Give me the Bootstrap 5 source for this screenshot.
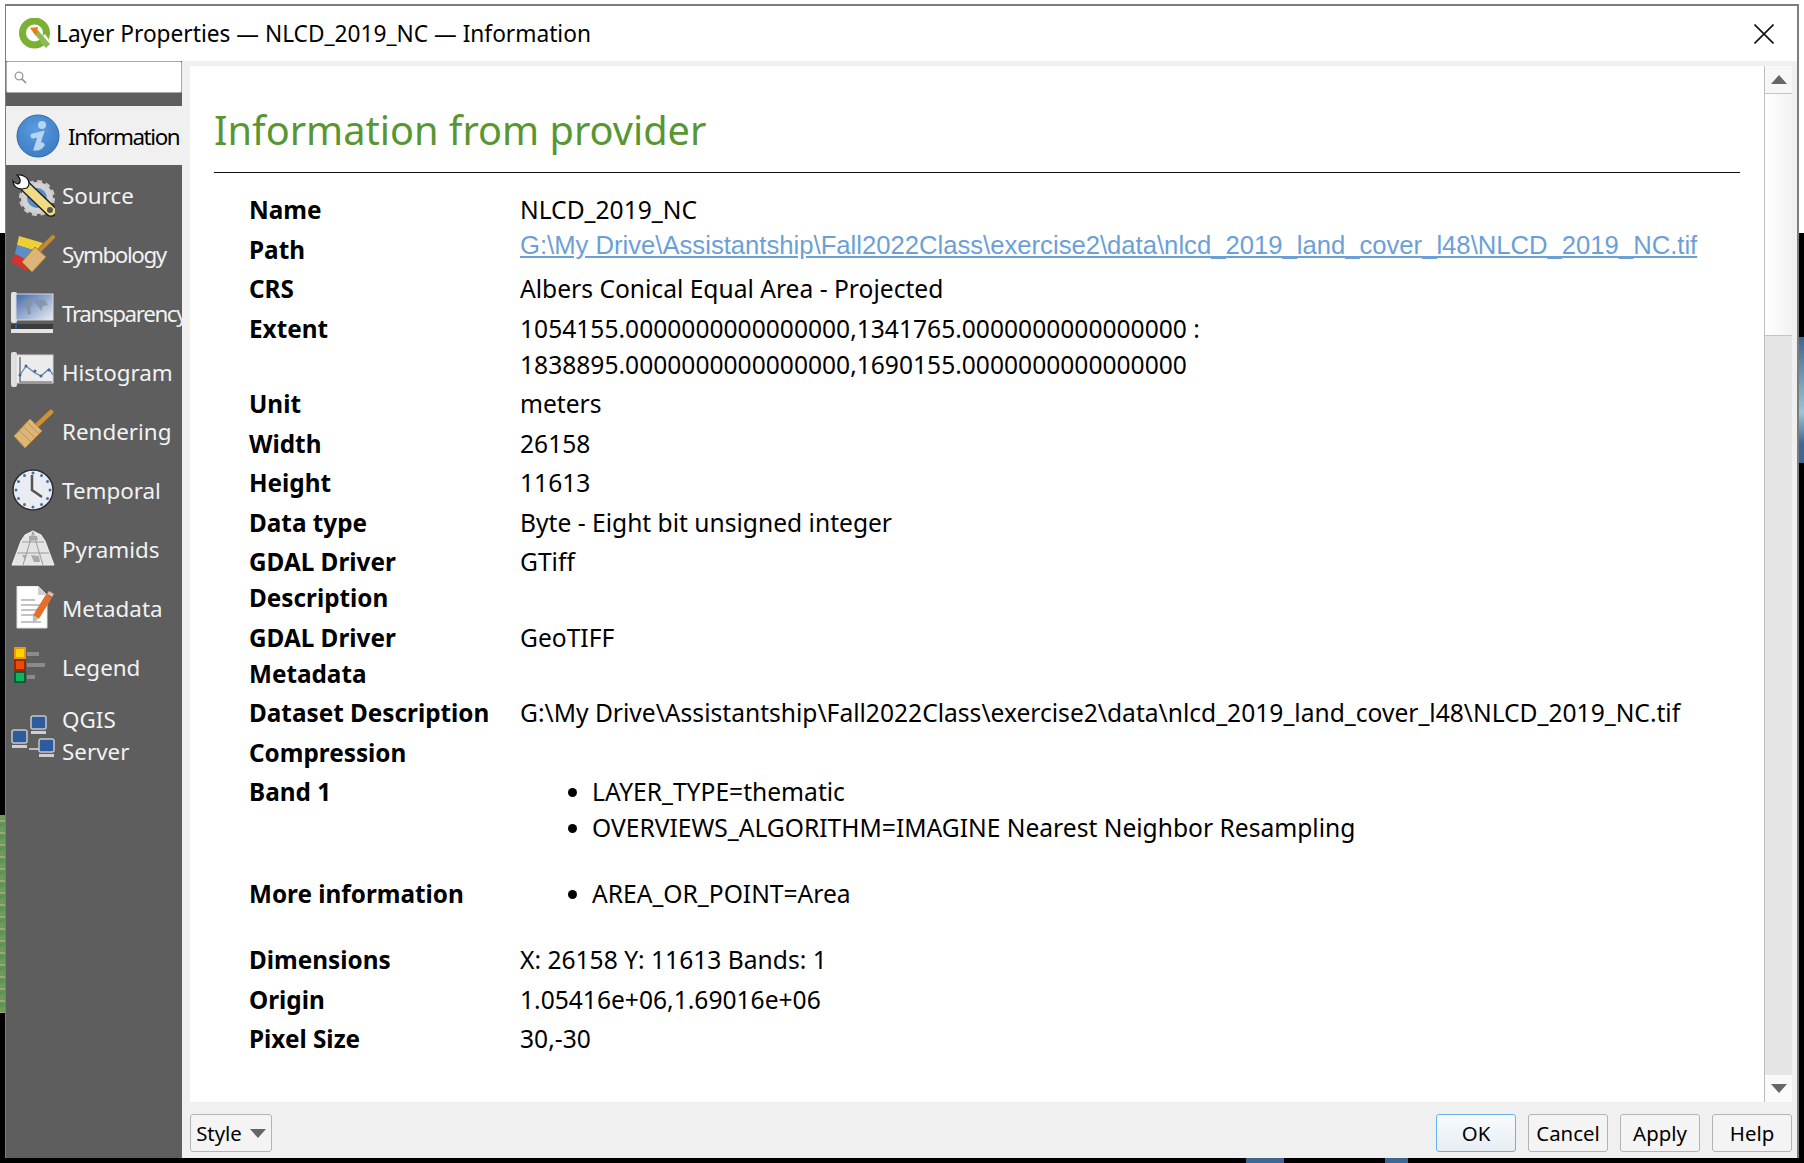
<!DOCTYPE html>
<html lang="en">
<head>
  <meta charset="UTF-8" />
  <meta name="viewport" content="width=device-width, initial-scale=1" />
  <title>Layer Properties</title>
  <link href="https://cdn.jsdelivr.net/npm/bootstrap@5.3.3/dist/css/bootstrap.min.css" rel="stylesheet" />
  <style>
    html, body { height: 100%; }
    body {
      margin: 0; overflow: hidden; position: relative;
      background: linear-gradient(#fff 0 233px, #000 233px);
      padding: 4px 5px 5px 5px;
      font-family: "Noto Sans", "Open Sans", sans-serif;
      font-size: 24.6px; color: #000;
    }
    .map-bit { position: absolute; }
    .map-left { left: 0; top: 815px; width: 5px; height: 198px; background: repeating-linear-gradient(#6f9a5c 0 5px, #9aa873 5px 7px, #5f9458 7px 12px); }
    .map-right { left: 1799px; top: 337px; width: 5px; height: 126px; background: linear-gradient(#3f6592, #7fa6bb 40%, #9fc3d3 60%, #3f6592 85%); }
    .map-b1 { left: 1246px; top: 1158px; width: 38px; height: 5px; background: #3f6592; }
    .map-b2 { left: 1385px; top: 1158px; width: 23px; height: 5px; background: #3f6592; }

    .dlg { height: 1154px; background: #f0f0f0; border: solid #7d7d7d; border-width: 2px 2px 0 1px; position: relative; }
    .dlg-title { height: 55px; background: #fff; padding-left: 13px; font-size: 22.7px; }
    .dlg-title span { margin-left: 5px; margin-top: 2px; }
    .close-x { border: 0; background: none; padding: 0; margin-right: 23px; line-height: 0; }

    .side { width: 176px; background: #5e5e5e; font-size: 22.4px; }
    .side-search { height: 32px; background: #fff; border: 1px solid #a9a9a9; border-radius: 2px; padding-left: 7px; margin-bottom: 13px; }
    .side-item { height: 59px; color: #f2f2f2; padding-left: 5px; gap: 7px; white-space: nowrap; overflow: hidden; }
    .side-item svg { flex: none; }
    .side-item span { padding-top: 3px; }
    .side-item.sel { background: #f0f0f0; color: #000; padding-left: 10px; gap: 8px; }
    .side-item.two { height: 80px; white-space: normal; line-height: 32px; }
    .side-item.two span { padding-top: 0; }
    .side-item .tight { letter-spacing: -1.4px; }

    .pane-wrap { margin: 5px 5px 0 8px; height: 1036px; }
    .pane { background: #fff; padding: 36px 24px 0 24px; overflow: hidden; }
    .pane h1 { color: #589632; font-size: 39.7px; font-weight: 400; line-height: 56px; margin: 0; padding-bottom: 14px; border-bottom: 1px solid #111; }
    .info-tbl { margin: 17px 0 0 35px; width: auto; }
    .info-tbl.table > tbody > tr > td { padding: 2px 0 1.5px; line-height: 36px; background: transparent; vertical-align: top; color: #000; }
    .info-tbl td:first-child { width: 271px; font-weight: 700; font-size: 24.3px; }
    .path-link { display: inline-block; vertical-align: top; line-height: 27px; font-family: "Liberation Sans", Arial, sans-serif; font-size: 25.65px; color: #6b9fd8; }
    .info-tbl ul { margin: 0 0 26.5px; padding-left: 72px; }

    .sbar { width: 28px; border-left: 1px solid #bdbdbd; background: #e5e5e5; }
    .sbar-btn { height: 27px; background: #fafafa; }
    .sbar-up { height: 270px; background: linear-gradient(90deg, #fff, #f2f2f2); border-bottom: 1px solid #c4c4c4; }
    .sbar-up .sbar-btn { border-bottom: 1px solid #c4c4c4; background: #f7f7f7; height: 28px; }
    .tri-up { width: 0; height: 0; border: 8px solid transparent; border-top: 0; border-bottom: 9px solid #666; }
    .tri-dn { width: 0; height: 0; border: 8px solid transparent; border-bottom: 0; border-top: 9px solid #666; }

    .foot { height: 56px; padding: 12px 5px 0 8px; }
    .foot-btns { gap: 12px; }
    .qbtn { height: 38px; width: 80px; padding: 1px 0 0; font-size: 20.4px; color: #000; background: #f4f4f4; border: 1px solid #b4b4b4; border-radius: 3px; line-height: 1; }
    .qbtn.on { border-color: #62b3f0; background: linear-gradient(#f8fbfe, #e6edf3); }
    .qbtn.dropdown-toggle { width: 82px; }
    .qbtn.dropdown-toggle::after { border-top: 9px solid #666; border-left: 8px solid transparent; border-right: 8px solid transparent; border-bottom: 0; margin-left: 8px; vertical-align: 3px; }
  </style>
</head>
<body>
  <div class="map-bit map-left"></div>
  <div class="map-bit map-right"></div>
  <div class="map-bit map-b1"></div>
  <div class="map-bit map-b2"></div>

  <div class="dlg d-flex flex-column">
    <div class="dlg-title d-flex align-items-center">
      <svg width="32" height="32" viewBox="0 0 32 32">
        <circle cx="15.500" cy="15" r="12" fill="none" stroke="#7cb034" stroke-width="7"/>
        <path d="M20 21l6-5 6 9-4 6z" fill="#fff"/>
        <path d="M14 14l4-3 13 15-4 4z" fill="#8dbb4e"/>
        <path d="M11 10l8-1-2 9z" fill="#ee7913"/>
      </svg>
      <span>Layer Properties — NLCD_2019_NC — Information</span>
      <button class="close-x ms-auto" type="button" aria-label="Close">
        <svg width="20" height="20" viewBox="0 0 20 20"><path d="M0.5 0.5l19 19M19.5 0.5l-19 19" stroke="#111" stroke-width="1.6" fill="none"/></svg>
      </button>
    </div>

    <div class="d-flex flex-grow-1">
      <div class="side flex-none">
        <div class="side-search d-flex align-items-center">
          <svg width="13" height="13" viewBox="0 0 13 13"><circle cx="5" cy="5" r="3.8" fill="none" stroke="#999" stroke-width="1.3"/><path d="M8 8l4 4" stroke="#888" stroke-width="1.6"/></svg>
        </div>

        <div class="side-item sel d-flex align-items-center">
          <svg width="44" height="44" viewBox="0 0 44 44">
            <defs><radialGradient id="gi" cx="45%" cy="35%" r="70%"><stop offset="0" stop-color="#5b9be0"/><stop offset="1" stop-color="#3a7cc2"/></radialGradient></defs>
            <circle cx="22" cy="22" r="21" fill="url(#gi)" stroke="#2f6aa8"/>
            <circle cx="26" cy="11" r="4" fill="#b5d5f2"/>
            <path d="M17 22l8-2-4.500 14c2.500 0 4-1 5.500-3" fill="none" stroke="#b5d5f2" stroke-width="5" stroke-linecap="round"/>
          </svg>
          <span class="tight">Information</span>
        </div>

        <div class="side-item d-flex align-items-center">
          <svg width="44" height="44" viewBox="0 0 44 44">
            <circle cx="26" cy="25" r="13" fill="#5b8dc6" stroke="#d2d2d2" stroke-width="6"/>
            <circle cx="26" cy="25" r="16.500" fill="none" stroke="#c9c9c9" stroke-width="3" stroke-dasharray="5 3.600"/>
            <path d="M15 14l25 24" stroke="#222" stroke-width="12" stroke-linecap="round"/>
            <path d="M15 14l25 24" stroke="#efdc85" stroke-width="9" stroke-linecap="round"/>
            <circle cx="39" cy="37" r="3" fill="#555"/>
            <path d="M2 8c2 3 6 4 7 1s-1-5-3-7c6-1 12 3 12 9 0 1-1 3-2 4l-5 1c-5 0-9-3-9-8z" fill="#fff" stroke="#111" stroke-width="1.200"/>
          </svg>
          <span>Source</span>
        </div>

        <div class="side-item d-flex align-items-center">
          <svg width="44" height="44" viewBox="0 0 44 44">
            <path d="M8 4l24 7-7 8-19-6z" fill="#ecd035"/>
            <path d="M6 13l19 6-7 10L4 22z" fill="#5a8fc9"/>
            <path d="M4 22l14 7-2 10L0 30z" fill="#d8312f"/>
            <path d="M27 20L42 5" stroke="#c58a2c" stroke-width="4" stroke-linecap="round"/>
            <path d="M24 15l11 10-14 15-10-10z" fill="#dcb577" stroke="#b47f30"/>
          </svg>
          <span class="tight">Symbology</span>
        </div>

        <div class="side-item d-flex align-items-center">
          <svg width="44" height="44" viewBox="0 0 44 44">
            <defs><linearGradient id="gt" x1="0" y1="0" x2="1" y2="1"><stop offset="0" stop-color="#3f68ad"/><stop offset="1" stop-color="#eceef2"/></linearGradient></defs>
            <rect x="0" y="1" width="6" height="31" rx="2" fill="#e4e4e4"/>
            <rect x="5" y="3" width="37" height="26" fill="url(#gt)" stroke="#d8d8d8"/>
            <path d="M12 10l7-2 3 4-3 4 1 7-3 1-2-8-3-2zM24 8l10 1 3 5-5 1-2 5-3-5-3-3z" fill="#8590a0" opacity=".8"/>
            <rect x="0" y="33" width="42" height="7" fill="#3b3b3b"/>
            <rect x="0" y="38" width="42" height="4" fill="#e4e4e4"/>
            <rect x="4" y="32" width="2" height="6" fill="#2c5aa0"/>
          </svg>
          <span class="tight">Transparency</span>
        </div>

        <div class="side-item d-flex align-items-center">
          <svg width="44" height="44" viewBox="0 0 44 44">
            <rect x="0" y="2" width="6" height="35" rx="2" fill="#e0e0e0"/>
            <rect x="5" y="5" width="37" height="28" fill="#ececec" stroke="#d4d4d4"/>
            <path d="M9 7v25h32" fill="none" stroke="#555" stroke-width="1.200"/>
            <path d="M9 25l6-9 9 7 6 3 8-7 4 6" fill="none" stroke="#5d7fa8" stroke-width="1.200"/>
            <g fill="#3b68a5"><circle cx="9" cy="25" r="1.500"/><circle cx="15" cy="16" r="1.500"/><circle cx="24" cy="21" r="1.500"/><circle cx="30" cy="26" r="1.500"/><circle cx="38" cy="20" r="1.500"/></g>
          </svg>
          <span>Histogram</span>
        </div>

        <div class="side-item d-flex align-items-center">
          <svg width="44" height="44" viewBox="0 0 44 44">
            <path d="M23 19L40 3" stroke="#d0922f" stroke-width="4.500" stroke-linecap="round"/>
            <path d="M19 10l12 12-17 17L3 27z" fill="#dcb577" stroke="#bd8a38"/>
            <path d="M9 22l11 11M13 18l11 11M17 14l11 11" stroke="#c29350" fill="none"/>
          </svg>
          <span>Rendering</span>
        </div>

        <div class="side-item d-flex align-items-center">
          <svg width="44" height="44" viewBox="0 0 44 44">
            <circle cx="22" cy="22" r="20" fill="#e9edf1" stroke="#2f2f2f" stroke-width="1.500"/>
            <g fill="#3e70b0"><circle cx="22" cy="5" r="1.500"/><circle cx="22" cy="39" r="1.500"/><circle cx="5" cy="22" r="1.500"/><circle cx="39" cy="22" r="1.500"/><circle cx="13.500" cy="7.500" r="1.500"/><circle cx="30.500" cy="7.500" r="1.500"/><circle cx="13.500" cy="36.500" r="1.500"/><circle cx="30.500" cy="36.500" r="1.500"/><circle cx="7.500" cy="13.500" r="1.500"/><circle cx="36.500" cy="13.500" r="1.500"/><circle cx="7.500" cy="30.500" r="1.500"/><circle cx="36.500" cy="30.500" r="1.500"/></g>
            <path d="M21 7v15l10 7" fill="none" stroke="#555" stroke-width="2.500"/>
          </svg>
          <span>Temporal</span>
        </div>

        <div class="side-item d-flex align-items-center">
          <svg width="44" height="44" viewBox="0 0 44 44">
            <path d="M14 8l8-4 8 4 4 6 9 24H1l9-24z" fill="#e4e4e4" stroke="#f2f2f2"/>
            <path d="M22 5L12 38M22 5l10 33M6 26h32M11 15h22" stroke="#9a9a9a" fill="none"/>
            <path d="M18 9l8 0 1 4-9 1zM20 28l8 1 1 6-6 0zM11 28l5 0-2 5z" fill="#a8a8a8"/>
          </svg>
          <span>Pyramids</span>
        </div>

        <div class="side-item d-flex align-items-center">
          <svg width="44" height="44" viewBox="0 0 44 44">
            <path d="M6 0h21l9 9v33H6z" fill="#fff" stroke="#ddd"/>
            <path d="M27 0v9h9z" fill="#cfcfcf"/>
            <path d="M10 14h14M10 19h20M10 24h18M10 29h17M10 36h20" stroke="#888" stroke-width="1.200"/>
            <path d="M25 31l13-21" stroke="#e2702a" stroke-width="7"/>
            <path d="M36 8l2-3 5 3-2 3z" fill="#e9b7a0"/>
            <path d="M21.800 29l6 3.500-6 5z" fill="#bbb"/>
          </svg>
          <span>Metadata</span>
        </div>

        <div class="side-item d-flex align-items-center">
          <svg width="44" height="44" viewBox="0 0 44 44">
            <rect x="4" y="3" width="10" height="10" fill="#ffd500" stroke="#f0960e" stroke-width="2"/>
            <rect x="4" y="15" width="10" height="10" fill="#f04a00" stroke="#8f2b12" stroke-width="2"/>
            <rect x="4" y="27" width="10" height="10" fill="#10b45c" stroke="#0b5c38" stroke-width="2"/>
            <path d="M16 9h12M16 20h18M16 32h8" stroke="#8b8b8b" stroke-width="4"/>
          </svg>
          <span>Legend</span>
        </div>

        <div class="side-item two d-flex align-items-center">
          <svg width="44" height="44" viewBox="0 0 44 44">
            <path d="M29 27v8M18 35h10" stroke="#bbb" stroke-width="2"/>
            <rect x="20" y="2" width="15" height="13" rx="2" fill="#2e5a9f" stroke="#c6c6c6" stroke-width="1.500"/>
            <path d="M20 17h15v3H20z" fill="#cfcfcf"/>
            <rect x="1" y="16" width="15" height="13" rx="2" fill="#2e5a9f" stroke="#c6c6c6" stroke-width="1.500"/>
            <path d="M1 31h15v3H1z" fill="#cfcfcf"/>
            <rect x="28" y="25" width="15" height="13" rx="2" fill="#2e5a9f" stroke="#c6c6c6" stroke-width="1.500"/>
            <path d="M28 40h15v3H28z" fill="#cfcfcf"/>
          </svg>
          <span>QGIS Server</span>
        </div>
      </div>

      <div class="flex-grow-1 d-flex flex-column">
        <div class="pane-wrap d-flex">
          <div class="pane flex-grow-1">
            <h1>Information from provider</h1>
            <table class="table table-borderless info-tbl">
              <tbody>
                <tr><td>Name</td><td>NLCD_2019_NC</td></tr>
                <tr><td>Path</td><td><a class="path-link" href="#">G:\My Drive\Assistantship\Fall2022Class\exercise2\data\nlcd_2019_land_cover_l48\NLCD_2019_NC.tif</a></td></tr>
                <tr><td>CRS</td><td>Albers Conical Equal Area - Projected</td></tr>
                <tr><td>Extent</td><td>1054155.0000000000000000,1341765.0000000000000000 :<br>1838895.0000000000000000,1690155.0000000000000000</td></tr>
                <tr><td>Unit</td><td>meters</td></tr>
                <tr><td>Width</td><td>26158</td></tr>
                <tr><td>Height</td><td>11613</td></tr>
                <tr><td>Data type</td><td>Byte - Eight bit unsigned integer</td></tr>
                <tr><td>GDAL Driver<br>Description</td><td>GTiff</td></tr>
                <tr><td>GDAL Driver<br>Metadata</td><td>GeoTIFF</td></tr>
                <tr><td>Dataset Description</td><td>G:\My Drive\Assistantship\Fall2022Class\exercise2\data\nlcd_2019_land_cover_l48\NLCD_2019_NC.tif</td></tr>
                <tr><td>Compression</td><td></td></tr>
                <tr><td>Band 1</td><td><ul><li>LAYER_TYPE=thematic</li><li>OVERVIEWS_ALGORITHM=IMAGINE Nearest Neighbor Resampling</li></ul></td></tr>
                <tr><td>More information</td><td><ul><li>AREA_OR_POINT=Area</li></ul></td></tr>
                <tr><td>Dimensions</td><td>X: 26158 Y: 11613 Bands: 1</td></tr>
                <tr><td>Origin</td><td>1.05416e+06,1.69016e+06</td></tr>
                <tr><td>Pixel Size</td><td>30,-30</td></tr>
              </tbody>
            </table>
          </div>
          <div class="sbar d-flex flex-column flex-none">
            <div class="sbar-up">
              <div class="sbar-btn d-flex align-items-center justify-content-center"><div class="tri-up"></div></div>
            </div>
            <div class="flex-grow-1"></div>
            <div class="sbar-btn d-flex align-items-center justify-content-center"><div class="tri-dn"></div></div>
          </div>
        </div>
        <div class="foot d-flex">
          <button type="button" class="btn qbtn dropdown-toggle">Style</button>
          <div class="ms-auto d-flex foot-btns">
            <button type="button" class="btn qbtn on">OK</button>
            <button type="button" class="btn qbtn">Cancel</button>
            <button type="button" class="btn qbtn">Apply</button>
            <button type="button" class="btn qbtn">Help</button>
          </div>
        </div>
      </div>
    </div>
  </div>

  <script src="https://cdn.jsdelivr.net/npm/bootstrap@5.3.3/dist/js/bootstrap.bundle.min.js"></script>
</body>
</html>
